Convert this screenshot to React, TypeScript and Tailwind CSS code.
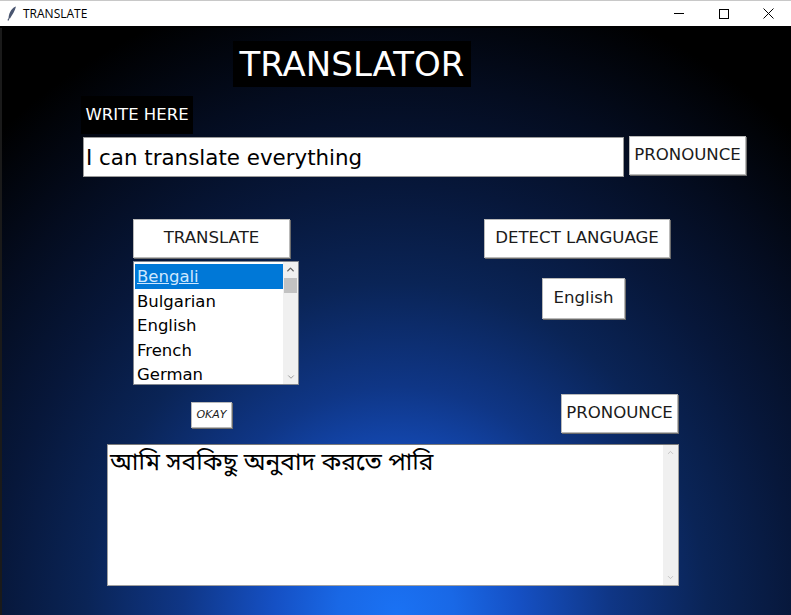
import { ChevronUp, ChevronDown } from "lucide-react";

const languages = ["Bengali", "Bulgarian", "English", "French", "German"];

const comic = "font-['DejaVu_Sans',sans-serif]";

const TitleBar = () => {
  return (
    <div className="h-[28px] bg-white border-t border-[#c8c8c8] border-b-2 border-b-black flex items-center font-['Open_Sans',sans-serif] text-[12px] text-black">
      <svg width="10" height="15" viewBox="0 0 10 15" className="ml-[7px] mr-[6px]">
        <path d="M9 0.5 C5.5 1.5 2 5.5 1.5 12.5 L3 12.5 C5 9 8 5 9 0.5 Z" fill="#4a5670" />
        <path d="M1.8 12.5 L1 14.5" stroke="#4a5670" strokeWidth="1.2" />
      </svg>
      <span>TRANSLATE</span>
      <div className="ml-auto flex items-center">
        <div className="w-[45px] h-[26px] flex items-center justify-center">
          <div className="w-[10px] h-px bg-black" />
        </div>
        <div className="w-[45px] h-[26px] flex items-center justify-center">
          <div className="w-[10px] h-[10px] border border-black" />
        </div>
        <div className="w-[45px] h-[26px] flex items-center justify-center">
          <svg width="11" height="11" viewBox="0 0 11 11">
            <path d="M0.5 0.5 L10.5 10.5 M10.5 0.5 L0.5 10.5" stroke="black" strokeWidth="1" />
          </svg>
        </div>
      </div>
    </div>
  );
};

const Btn = ({ label, className }: { label: string; className: string }) => {
  return (
    <div
      className={`bg-white border border-[#b9b9b9] shadow-[1px_1px_0_#6b6b6b] flex items-center justify-center text-[#1b1b1b] ${comic} ${className}`}
    >
      {label}
    </div>
  );
};

export default function App() {
  return (
    <div className="w-[791px] h-[615px] overflow-hidden flex flex-col bg-black">
      <TitleBar />
      <div className="flex-1 border-l-2 border-[#1a1a1a] bg-[radial-gradient(ellipse_82%_118%_at_50%_100%,#1a72f4_0%,#1968e6_9%,#1550c4_19%,#0f3686_33%,#0a2456_48%,#07173a_62%,#040c1f_77%,#000_93%)]">
        {/* heading */}
        <div className="pl-[231px] pt-[13px]">
          <div className={`w-[238px] h-[46px] bg-black text-white text-[34px] leading-none flex items-center justify-center ${comic}`}>
            TRANSLATOR
          </div>
        </div>

        <div className="pl-[79px] pt-[9px]">
          <div className={`w-[112px] h-[38px] bg-black text-white text-[16.5px] flex items-center justify-center ${comic}`}>
            WRITE HERE
          </div>
        </div>

        {/* input row */}
        <div className="pl-[81px] pt-[2px] flex items-start">
          <div className={`mt-[1px] w-[541px] h-[40px] bg-white border border-[#9a9a9a] flex items-center pl-[2px] pt-[2px] text-[21.4px] text-black ${comic}`}>
            I can translate everything
          </div>
          <Btn label="PRONOUNCE" className="ml-[5px] w-[117px] h-[39px] text-[16.6px]" />
        </div>

        {/* middle */}
        <div className="pt-[42px] flex items-start">
          <div className="ml-[131px] flex flex-col items-start">
            <Btn label="TRANSLATE" className="w-[157px] h-[39px] text-[16.6px]" />
            <div className="mt-[3px] w-[166px] h-[124px] bg-white border border-[#828790] flex">
              <div className={`flex-1 pt-[2px] pl-[1px] text-[16.5px] text-black ${comic}`}>
                {languages.map((lang, i) => (
                  <div
                    key={lang}
                    className={`h-[24.5px] leading-[25px] pl-[2px] ${i === 0 ? "bg-[#0078d7] text-[#cfe8ff] underline" : ""}`}
                  >
                    {lang}
                  </div>
                ))}
              </div>
              <div className="w-[15px] bg-[#f0f0f0] flex flex-col items-center">
                <ChevronUp size={11} strokeWidth={3} className="text-[#606060] mt-[2px]" />
                <div className="w-[13px] h-[15px] bg-[#c2c2c2] mt-[3px]" />
                <ChevronDown size={10} strokeWidth={2} className="text-[#8a8a8a] mt-auto mb-[2px]" />
              </div>
            </div>
            <Btn label="OKAY" className="ml-[58px] mt-[17px] w-[41px] h-[26px] text-[11px] italic" />
          </div>

          <div className="ml-[185px] flex flex-col items-start">
            <Btn label="DETECT LANGUAGE" className="w-[186px] h-[39px] text-[16.6px]" />
            <Btn label="English" className="ml-[58px] mt-[20px] w-[83px] h-[41px] text-[16.6px]" />
            <Btn label="PRONOUNCE" className="ml-[77px] mt-[75px] w-[117px] h-[39px] text-[16.6px]" />
          </div>
        </div>

        {/* output */}
        <div className="pl-[105px] pt-[11px]">
          <div className="w-[572px] h-[142px] bg-white border border-[#a0a0a0] border-t-[#7a7a7a] flex">
            <div className="flex-1 pl-[2px] pt-[4px] text-[24.5px] leading-tight text-black font-['Noto_Sans_Bengali','Noto_Sans',sans-serif]">
              আমি সবকিছু অনুবাদ করতে পারি
            </div>
            <div className="w-[15px] bg-[#f0f0f0] flex flex-col items-center justify-between py-[3px]">
              <ChevronUp size={9} strokeWidth={2} className="text-[#b5b5b5]" />
              <ChevronDown size={9} strokeWidth={2} className="text-[#b5b5b5]" />
            </div>
          </div>
        </div>
      </div>
    </div>
  );
}
